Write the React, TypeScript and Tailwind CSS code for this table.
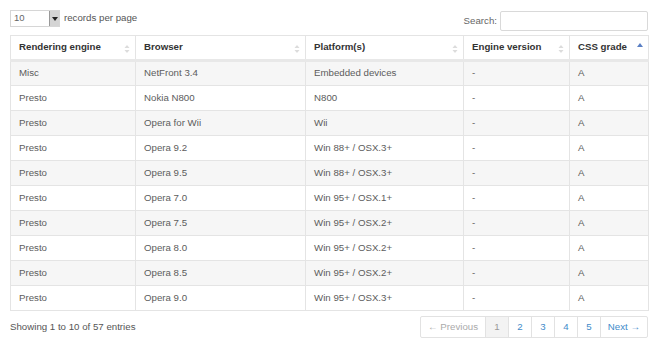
import { useState } from 'react'

type Row = {
  engine: string
  browser: string
  platform: string
  version: string
  grade: string
}

const rows: Row[] = [
  { engine: 'Misc', browser: 'NetFront 3.4', platform: 'Embedded devices', version: '-', grade: 'A' },
  { engine: 'Presto', browser: 'Nokia N800', platform: 'N800', version: '-', grade: 'A' },
  { engine: 'Presto', browser: 'Opera for Wii', platform: 'Wii', version: '-', grade: 'A' },
  { engine: 'Presto', browser: 'Opera 9.2', platform: 'Win 88+ / OSX.3+', version: '-', grade: 'A' },
  { engine: 'Presto', browser: 'Opera 9.5', platform: 'Win 88+ / OSX.3+', version: '-', grade: 'A' },
  { engine: 'Presto', browser: 'Opera 7.0', platform: 'Win 95+ / OSX.1+', version: '-', grade: 'A' },
  { engine: 'Presto', browser: 'Opera 7.5', platform: 'Win 95+ / OSX.2+', version: '-', grade: 'A' },
  { engine: 'Presto', browser: 'Opera 8.0', platform: 'Win 95+ / OSX.2+', version: '-', grade: 'A' },
  { engine: 'Presto', browser: 'Opera 8.5', platform: 'Win 95+ / OSX.2+', version: '-', grade: 'A' },
  { engine: 'Presto', browser: 'Opera 9.0', platform: 'Win 95+ / OSX.3+', version: '-', grade: 'A' },
]

const columns = [
  { label: 'Rendering engine', width: 'w-[125px]' },
  { label: 'Browser', width: 'w-[170px]' },
  { label: 'Platform(s)', width: 'w-[158px]' },
  { label: 'Engine version', width: 'w-[106px]' },
  { label: 'CSS grade', width: 'w-[79px]' },
]

function SortIcon({ active }: { active?: boolean }) {
  if (active)
    return (
      <svg width="6" height="8" viewBox="0 0 6 8" className="absolute right-[5px] top-[7px]">
        <path d="M0 4 L3 0 L6 4 Z" fill="#5a7fc4" />
      </svg>
    )
  return (
    <svg width="6" height="10" viewBox="0 0 6 10" className="absolute right-[5px] top-[8px]">
      <path d="M0.5 4 L3 1 L5.5 4 Z" fill="#dcdcdc" />
      <path d="M0.5 6 L3 9 L5.5 6 Z" fill="#dcdcdc" />
    </svg>
  )
}

export default function App() {
  const [page, setPage] = useState(1)
  return (
    <div className="w-[658px] h-[343px] bg-white px-[10px] pt-[10px] text-[9.7px] text-[#555] font-['Liberation_Sans',Arial,sans-serif]">
      <div className="flex items-start justify-between h-[25px]">
        <div className="flex items-center gap-[4px]">
          <div className="flex items-center w-[50px] h-[17px] border border-[#d6d6d6] bg-white">
            <span className="flex-1 pl-[3px] text-[9.5px] text-[#666]">10</span>
            <span className="w-[10px] h-[15px] bg-[#d4d4d4] border-l border-[#999] flex items-center justify-center">
              <svg width="6" height="4" viewBox="0 0 6 4">
                <path d="M0 0 L6 0 L3 4 Z" fill="#222" />
              </svg>
            </span>
          </div>
          <span className="text-[#555]">records per page</span>
        </div>
        <div className="flex items-center gap-[3px] pt-[1px]">
          <span className="text-[#666]">Search:</span>
          <input className="w-[148px] h-[20px] border border-[#d9d9d9] rounded-[2px] outline-none" />
        </div>
      </div>

      <table className="w-[638px] border-collapse table-fixed">
        <thead>
          <tr>
            {columns.map((c, i) => (
              <th
                key={c.label}
                className={`${c.width} relative h-[25px] border border-[#e4e4e4] border-b-[3px] border-b-[#e8e8e8] px-[8px] text-left align-middle font-bold text-[#333]`}>
                {c.label}
                <SortIcon active={i === 4} />
              </th>
            ))}
          </tr>
        </thead>
        <tbody>
          {rows.map((r, i) => (
            <tr key={i} className={i % 2 === 0 ? 'bg-[#f6f6f6]' : 'bg-white'}>
              {[r.engine, r.browser, r.platform, r.version, r.grade].map((v, j) => (
                <td key={j} className="h-[25px] border border-[#e4e4e4] px-[8px] align-middle text-[#5c5c5c]">
                  {v}
                </td>
              ))}
            </tr>
          ))}
        </tbody>
      </table>

      <div className="flex items-center justify-between mt-[5px]">
        <span className="text-[#555]">Showing 1 to 10 of 57 entries</span>
        <div className="flex h-[22px] border border-[#e2e2e2] rounded-[2px]">
          <span className="w-[65px] flex items-center justify-center text-[#aaa] border-r border-[#e2e2e2]">
            ← Previous
          </span>
          {[1, 2, 3, 4, 5].map((n) => (
            <span
              key={n}
              onClick={() => setPage(n)}
              className={`w-[23px] flex items-center justify-center border-r border-[#e2e2e2] cursor-pointer ${
                page === n ? 'bg-[#f3f3f3] text-[#999]' : 'text-[#428bca]'
              }`}>
              {n}
            </span>
          ))}
          <span className="w-[46px] flex items-center justify-center text-[#428bca]">Next →</span>
        </div>
      </div>
    </div>
  )
}
